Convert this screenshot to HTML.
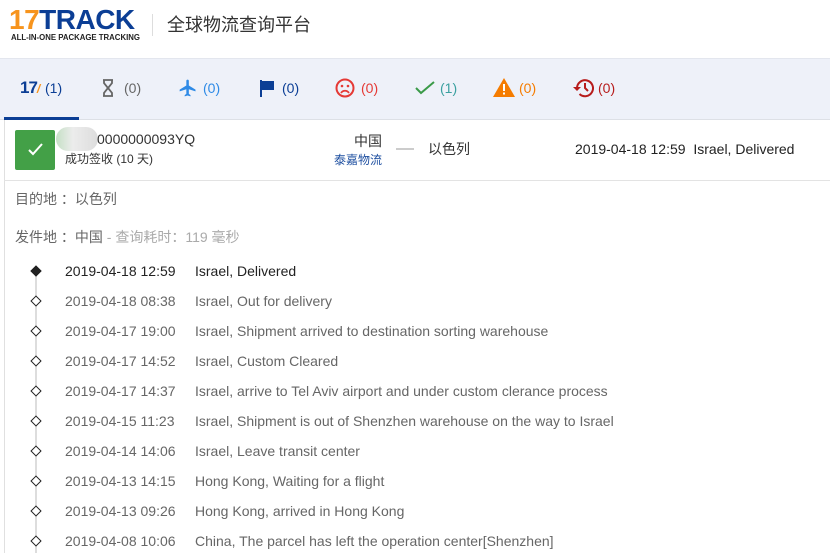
<!DOCTYPE html>
<html><head><meta charset="utf-8"><style>
*{margin:0;padding:0;box-sizing:border-box}
html,body{width:830px;height:553px;overflow:hidden}
body{background:#fff;font-family:"Liberation Sans","Noto Sans CJK SC",sans-serif;position:relative;color:#333}
.a{position:absolute;white-space:nowrap}
.tab{position:absolute;top:78px;font-size:14px;height:20px;line-height:20px;white-space:nowrap}
.row{position:absolute;left:0;width:830px;height:20px;line-height:20px;font-size:14px;color:#666;white-space:nowrap}
.row .d{position:absolute;left:65px;white-space:nowrap}
.row .t{position:absolute;left:195px;white-space:nowrap}
.row .m{position:absolute;left:32px;top:6px;width:8px;height:8px;border:1.3px solid #222;background:#fff;transform:rotate(45deg)}
</style></head><body>
<div class="a" style="left:9px;top:6px;font:900 28px 'Liberation Sans',sans-serif;letter-spacing:-0.5px;line-height:27px"><span style="color:#f7941d">17</span><span style="color:#0b3e95">TRACK</span></div>
<div class="a" style="left:11px;top:33px;font:bold 7.8px 'Liberation Sans',sans-serif;color:#222">ALL-IN-ONE PACKAGE TRACKING</div>
<div class="a" style="left:152px;top:14px;width:1px;height:22px;background:#ddd"></div>
<div class="a" style="left:167px;top:13px;font-size:18px;color:#333;line-height:24px">全球物流查询平台</div>
<div class="a" style="left:0;top:58px;width:830px;height:62px;background:#eef1f9;border-top:1px solid #e3e6ee;border-bottom:1px solid #dde0e6"></div>
<div class="a" style="left:4px;top:117px;width:75px;height:3px;background:#0b3e95"></div>
<div class="tab" style="left:20px;color:#0b3e95;font-weight:900;font-size:17px;letter-spacing:-1px">17<span style="color:#f7941d;font-size:12px;font-style:italic">/</span></div>
<div class="tab" style="left:45px;color:#0b3e95">(1)</div>
<svg class="a" style="left:102px;top:79px" width="12" height="18" viewBox="0 0 12 18"><path d="M1 1h10M1 17h10M2 1v3l4 5 4-5V1M2 17v-3l4-5 4 5v3" fill="none" stroke="#666" stroke-width="1.8"/></svg>
<div class="tab" style="left:124px;color:#666">(0)</div>
<svg class="a" style="left:178px;top:78px" width="20" height="20" viewBox="0 0 24 24"><path d="M21 16v-2l-8-5V3.5a1.5 1.5 0 0 0-3 0V9l-8 5v2l8-2.5V19l-2 1.5V22l3.5-1 3.5 1v-1.5L13 19v-5.5z" fill="#2e8ae6"/></svg>
<div class="tab" style="left:203px;color:#2e8ae6">(0)</div>
<svg class="a" style="left:259px;top:80px" width="16" height="17" viewBox="0 0 16 17"><path d="M1 0v17h2V10h12V1H3V0z" fill="#0b3e95"/></svg>
<div class="tab" style="left:282px;color:#0b3e95">(0)</div>
<svg class="a" style="left:335px;top:78px" width="20" height="20" viewBox="0 0 20 20"><circle cx="10" cy="10" r="8.5" fill="none" stroke="#e53935" stroke-width="2"/><circle cx="7" cy="8" r="1.3" fill="#e53935"/><circle cx="13" cy="8" r="1.3" fill="#e53935"/><path d="M6 15c2-3 6-3 8 0" fill="none" stroke="#e53935" stroke-width="1.8"/></svg>
<div class="tab" style="left:361px;color:#e53935">(0)</div>
<svg class="a" style="left:415px;top:81px" width="20" height="14" viewBox="0 0 20 14"><path d="M1 7l5 5L19 1" fill="none" stroke="#3a9a48" stroke-width="2"/></svg>
<div class="tab" style="left:440px;color:#3aa0a0">(1)</div>
<svg class="a" style="left:493px;top:78px" width="22" height="19" viewBox="0 0 22 19"><path d="M11 0L22 19H0z" fill="#f57c00"/><rect x="10" y="6" width="2" height="7" fill="#fff"/><rect x="10" y="14.5" width="2" height="2" fill="#fff"/></svg>
<div class="tab" style="left:519px;color:#f57c00">(0)</div>
<svg class="a" style="left:572px;top:78px" width="22" height="20" viewBox="0 0 22 20"><path d="M5 10a8 8 0 1 1 2.5 6" fill="none" stroke="#b71c1c" stroke-width="2"/><path d="M1 9h8l-4 4z" fill="#b71c1c"/><path d="M13 5v5l3 3" fill="none" stroke="#b71c1c" stroke-width="2"/></svg>
<div class="tab" style="left:598px;color:#b71c1c">(0)</div>
<div class="a" style="left:4px;top:120px;width:1px;height:433px;background:#e0e0e0"></div>
<div class="a" style="left:4px;top:180px;width:826px;height:1px;background:#e3e3e3"></div>
<div class="a" style="left:15px;top:130px;width:40px;height:40px;background:#43a047;border-radius:2px"></div>
<svg class="a" style="left:28px;top:143px" width="15" height="13" viewBox="0 0 15 13"><path d="M1 7l4 4 9-10" fill="none" stroke="#fff" stroke-width="2"/></svg>
<div class="a" style="left:56px;top:127px;width:42px;height:24px;border-radius:12px;background:linear-gradient(90deg,#c5e0c5,#ececec 40%,#ddd)"></div>
<div class="a" style="left:97px;top:130px;font-size:14px;color:#333;line-height:18px">0000000093YQ</div>
<div class="a" style="left:65px;top:151px;font-size:12px;color:#333;line-height:16px">成功签收 (10 天)</div>
<div class="a" style="left:354px;top:132px;font-size:14px;color:#333;line-height:18px">中国</div>
<div class="a" style="left:334px;top:152px;font-size:12px;color:#1e4fa0;line-height:16px">泰嘉物流</div>
<div class="a" style="left:396px;top:148px;width:18px;height:2px;background:#ccc"></div>
<div class="a" style="left:428px;top:140px;font-size:14px;color:#333;line-height:18px">以色列</div>
<div class="a" style="left:575px;top:140px;font-size:14px;color:#222;line-height:18px">2019-04-18 12:59&nbsp; Israel, Delivered</div>
<div class="a" style="left:15px;top:190px;font-size:14px;color:#666;line-height:18px">目的地 ：以色列</div>
<div class="a" style="left:15px;top:228px;font-size:14px;color:#666;line-height:18px">发件地 ：中国 <span style="color:#aaa">- 查询耗时：119 毫秒</span></div>
<div class="a" style="left:35px;top:276px;width:2px;height:277px;background:#ddd"></div>
<div class="row" style="top:261px;color:#222"><i class="m" style="background:#222"></i><span class="d">2019-04-18 12:59</span><span class="t">Israel, Delivered</span></div>
<div class="row" style="top:291px"><i class="m"></i><span class="d">2019-04-18 08:38</span><span class="t">Israel, Out for delivery</span></div>
<div class="row" style="top:321px"><i class="m"></i><span class="d">2019-04-17 19:00</span><span class="t">Israel, Shipment arrived to destination sorting warehouse</span></div>
<div class="row" style="top:351px"><i class="m"></i><span class="d">2019-04-17 14:52</span><span class="t">Israel, Custom Cleared</span></div>
<div class="row" style="top:381px"><i class="m"></i><span class="d">2019-04-17 14:37</span><span class="t">Israel, arrive to Tel Aviv airport and under custom clerance process</span></div>
<div class="row" style="top:411px"><i class="m"></i><span class="d">2019-04-15 11:23</span><span class="t">Israel, Shipment is out of Shenzhen warehouse on the way to Israel</span></div>
<div class="row" style="top:441px"><i class="m"></i><span class="d">2019-04-14 14:06</span><span class="t">Israel, Leave transit center</span></div>
<div class="row" style="top:471px"><i class="m"></i><span class="d">2019-04-13 14:15</span><span class="t">Hong Kong, Waiting for a flight</span></div>
<div class="row" style="top:501px"><i class="m"></i><span class="d">2019-04-13 09:26</span><span class="t">Hong Kong, arrived in Hong Kong</span></div>
<div class="row" style="top:531px"><i class="m"></i><span class="d">2019-04-08 10:06</span><span class="t">China, The parcel has left the operation center[Shenzhen]</span></div>
</body></html>
